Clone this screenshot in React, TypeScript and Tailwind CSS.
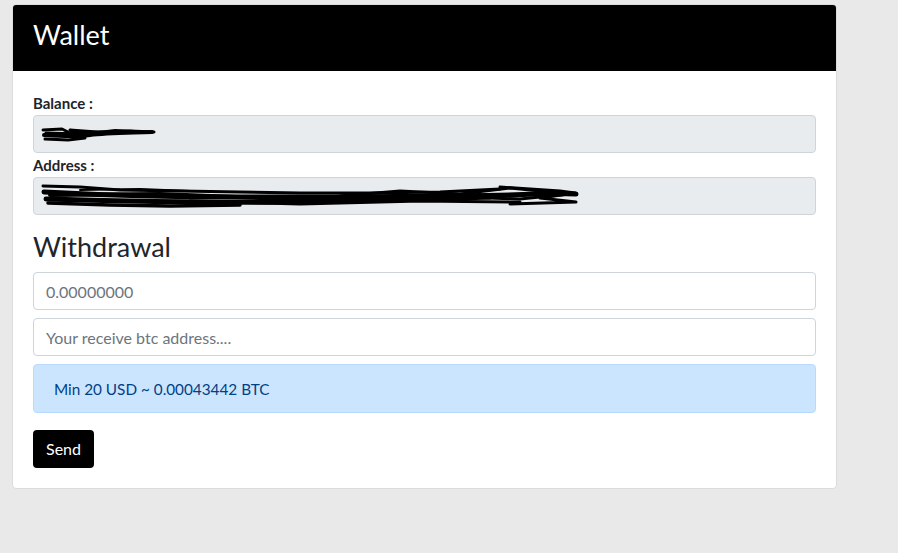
import React from "react";

function Scribble({ width, height, d }: { width: number; height: number; d: [string, number][] }) {
  return (
    <svg width={width} height={height} viewBox={`0 0 ${width} ${height}`} className="block">
      {d.map(([p, w], i) => (
        <path key={i} d={p} stroke="#000" strokeWidth={w} fill="none" strokeLinecap="round" strokeLinejoin="round" />
      ))}
    </svg>
  );
}

export default function App() {
  return (
    <div className="min-h-[553px] w-[898px] bg-[#e9e9e9] pt-[4px] pl-[12px]" style={{ fontFamily: "Lato, 'Open Sans', sans-serif" }}>
      <div className="w-[825px] overflow-hidden rounded-[4px] border border-[#dcdcdc] bg-white">
        <div className="flex h-[66px] items-center bg-black px-[20px] pb-[5px]">
          <h1 className="text-[27px] font-normal text-white">Wallet</h1>
        </div>
        <div className="flex flex-col px-[20px] pt-[20px] pb-[20px] text-[#212529]">
          <label className="h-[24px] text-[15px] font-bold leading-[24px]">Balance :</label>
          <div className="flex h-[38px] items-center rounded-[4px] border border-[#ced4da] bg-[#e9ecef] px-[6px]">
            <Scribble
              width={116}
              height={22}
              d={[
                ["M3 7 L22 6 L30 10 L60 9 L90 8 L114 9", 3],
                ["M4 12 C20 13, 35 14, 50 12 S80 10, 112 9", 4],
                ["M6 10 L40 11 L30 7 L70 10", 3],
                ["M5 16 L28 17 L45 15", 3],
                ["M50 10 L75 7 L95 8", 2],
              ]}
            />
          </div>
          <label className="h-[24px] text-[15px] font-bold leading-[24px]">Address :</label>
          <div className="flex h-[38px] items-center rounded-[4px] border border-[#ced4da] bg-[#e9ecef] px-[6px]">
            <Scribble
              width={540}
              height={32}
              d={[
                ["M3 6 L40 7 L80 10 L140 11 L200 12 L260 13 L330 13 L400 12 L460 9", 3],
                ["M4 12 C60 15, 120 17, 200 17 S330 17, 420 16 S500 12, 536 14", 5],
                ["M6 19 C80 21, 160 23, 240 22 S360 20, 450 17", 5],
                ["M10 15 L120 14 L220 18 L330 19 L440 15", 4],
                ["M8 23 L70 25 L130 26 L200 25", 3.5],
                ["M300 16 L360 11 L420 14 L470 8 L530 14 L480 19 L420 17", 3],
                ["M460 7 L520 11 L535 13 L500 18 L536 22 L470 24", 3],
                ["M150 21 L260 24 L380 21 L480 22", 3],
                ["M40 10 L100 9 L150 11", 2],
              ]}
            />
          </div>
          <h2 className="mt-[15px] mb-[8px] h-[34px] text-[27px] leading-[34px] font-normal">Withdrawal</h2>
          <input
            className="h-[38px] rounded-[4px] border border-[#ced4da] bg-white px-[12px] text-[16px] text-[#495057] placeholder:text-[#6c757d] outline-none"
            placeholder="0.00000000"
          />
          <input
            className="mt-[8px] h-[38px] rounded-[4px] border border-[#ced4da] bg-white px-[12px] text-[16px] text-[#495057] placeholder:text-[#6c757d] outline-none"
            placeholder="Your receive btc address...."
          />
          <div className="mt-[8px] flex h-[49px] items-center rounded-[4px] border border-[#b8daff] bg-[#cce5ff] px-[20px] pt-[2px] text-[15.3px] text-[#004085]">
            Min 20 USD ~ 0.00043442 BTC
          </div>
          <div className="mt-[17px]">
            <button className="h-[38px] w-[61px] rounded-[4px] bg-black text-[16px] text-white">Send</button>
          </div>
        </div>
      </div>
    </div>
  );
}
